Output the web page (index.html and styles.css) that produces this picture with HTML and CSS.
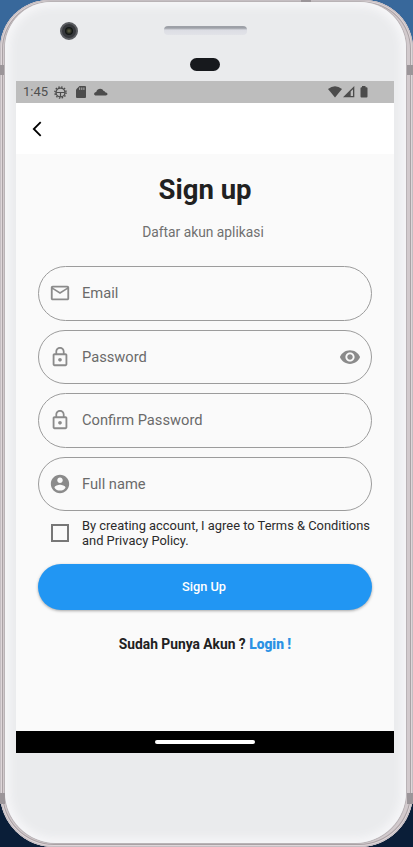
FILE: index.html
```html
<!DOCTYPE html>
<html lang="id">
<head>
<meta charset="utf-8">
<title>Sign up</title>
<link rel="stylesheet" href="styles.css">
</head>
<body>
<div class="phone">
  <i class="antenna top-left"></i><i class="antenna top-right"></i><i class="antenna bottom-left"></i><i class="antenna bottom-right"></i><i class="antenna upper"></i>
  <div class="face">
    <div class="camera"><i></i></div>
    <div class="speaker"></div>
    <div class="sensor"></div>
    <main class="screen">
      <header class="status">
        <span class="time">1:45</span>
        <svg class="gear" width="13" height="13" viewBox="0 0 14 14"><circle cx="7" cy="7" r="6" fill="none" stroke="#4c4c4c" stroke-width="1.6" stroke-dasharray="1.55 1.59"/><circle cx="7" cy="7" r="4.8" fill="none" stroke="#4c4c4c" stroke-width="1.4"/><path d="M2.5 7h9M7 7v4.5" stroke="#4c4c4c" stroke-width="1.3"/></svg>
        <svg class="sd" width="10" height="12" viewBox="0 0 10 12"><path d="M3.5 0H9q1 0 1 1v10q0 1-1 1H1q-1 0-1-1V3.5z" fill="#4c4c4c"/><path d="M3.7 1.5v2.4M5.8 1.5v2.4M7.9 1.5v2.4" stroke="#bdbdbd" stroke-width=".9"/></svg>
        <svg class="cloud" width="14" height="8" viewBox="0 0 14 8"><path d="M2.2 7.5C-.7 7.5-.6 4.6 2.2 4 3.3.2 8-.5 9.6 3c.8 0 1.3.5 1.5 1.2 3 .1 3.2 3.3.6 3.3z" fill="#4c4c4c"/></svg>
        <svg class="wifi" width="14" height="12" viewBox="0 0 14 12"><path d="M0 3Q7-2.7 14 3L7 11.5z" fill="#4c4c4c"/></svg>
        <svg class="signal" width="12" height="12" viewBox="0 0 12 12"><path d="M0 11.3L11.3 0v11.3z" fill="#4c4c4c"/><path d="M7.7 5.5L10 3.2V10H7.7z" fill="#bdbdbd"/></svg>
        <svg class="battery" width="8" height="12" viewBox="0 0 8 12"><path d="M2 0h3.5v1.2h1q1 0 1 1v8.3q0 1-1 1h-5q-1 0-1-1V2.2q0-1 1-1H2z" fill="#4c4c4c"/></svg>
      </header>
      <nav class="appbar"><svg width="10" height="16" viewBox="0 0 10 16"><path d="M8.7 1.1L1.8 8l6.9 6.9" fill="none" stroke="#000" stroke-width="1.8"/></svg></nav>
      <form class="content">
        <h1>Sign up</h1>
        <p class="subtitle">Daftar akun aplikasi</p>
        <div class="field"><svg class="icon" viewBox="0 0 24 24"><path d="M22 6c0-1.1-.9-2-2-2H4c-1.1 0-2 .9-2 2v12c0 1.1.9 2 2 2h16c1.1 0 2-.9 2-2V6zm-2 0l-8 5-8-5h16zm0 12H4V8l8 5 8-5v10z"/></svg><span>Email</span></div>
        <div class="field"><svg class="icon" viewBox="0 0 24 24"><path d="M12 17c1.1 0 2-.9 2-2s-.9-2-2-2-2 .9-2 2 .9 2 2 2zm6-9h-1V6c0-2.76-2.24-5-5-5S7 3.24 7 6v2H6c-1.1 0-2 .9-2 2v10c0 1.1.9 2 2 2h12c1.1 0 2-.9 2-2V10c0-1.1-.9-2-2-2zM8.9 6c0-1.71 1.39-3.1 3.1-3.1s3.1 1.39 3.1 3.1v2H8.9V6zM18 20H6V10h12v10z"/></svg><span>Password</span><svg class="icon eye" viewBox="0 0 24 24"><path d="M12 4.5C7 4.5 2.73 7.61 1 12c1.73 4.39 6 7.5 11 7.5s9.27-3.11 11-7.5c-1.73-4.39-6-7.5-11-7.5zM12 17c-2.76 0-5-2.24-5-5s2.24-5 5-5 5 2.24 5 5-2.24 5-5 5zm0-8c-1.66 0-3 1.34-3 3s1.34 3 3 3 3-1.34 3-3-1.34-3-3-3z"/></svg></div>
        <div class="field"><svg class="icon" viewBox="0 0 24 24"><path d="M12 17c1.1 0 2-.9 2-2s-.9-2-2-2-2 .9-2 2 .9 2 2 2zm6-9h-1V6c0-2.76-2.24-5-5-5S7 3.24 7 6v2H6c-1.1 0-2 .9-2 2v10c0 1.1.9 2 2 2h12c1.1 0 2-.9 2-2V10c0-1.1-.9-2-2-2zM8.9 6c0-1.71 1.39-3.1 3.1-3.1s3.1 1.39 3.1 3.1v2H8.9V6zM18 20H6V10h12v10z"/></svg><span>Confirm Password</span></div>
        <div class="field"><svg class="icon" viewBox="0 0 24 24"><path d="M12 2C6.48 2 2 6.48 2 12s4.48 10 10 10 10-4.48 10-10S17.52 2 12 2zm0 3c1.66 0 3 1.34 3 3s-1.34 3-3 3-3-1.34-3-3 1.34-3 3-3zm0 14.2c-2.5 0-4.71-1.28-6-3.22.03-1.99 4-3.08 6-3.08 1.99 0 5.97 1.09 6 3.08-1.29 1.94-3.5 3.22-6 3.22z"/></svg><span>Full name</span></div>
        <div class="terms"><i class="checkbox"></i><span>By creating account, I agree to Terms &amp; Conditions<br>and Privacy Policy.</span></div>
        <button type="button">Sign Up</button>
        <p class="login">Sudah Punya Akun ? <b>Login !</b></p>
      </form>
      <footer class="home"><i></i></footer>
    </main>
  </div>
</div>
</body>
</html>
```
FILE: styles.css
```css
* { box-sizing: border-box; }
body {
  margin: 0; width: 413px; height: 847px; overflow: hidden;
  font-family: Roboto, sans-serif;
  background: linear-gradient(#38689b 0, #38689b 400px, #0a1e38 401px);
}
.phone {
  position: relative; height: 847px; padding: 2px 7px 4px 5px;
  border-radius: 49px 49px 54px 54px;
  background: #d2cacd;
  box-shadow: inset 0 0 0 1px #c5bec2, inset 0 0 0 2px #ded6d9, inset 0 0 0 3px #aaa2a5;
}
.face {
  height: 841px; padding: 20px 12px 0 11px;
  display: flex; flex-direction: column;
  border-radius: 46px 46px 51px 51px;
  background: #eaebed;
  box-shadow: 0 0 0 1px #b9b3b6, inset 0 0 8px 5px #f6f6f8;
}
.camera {
  width: 18px; height: 18px; margin-left: 44px; flex: none;
  display: grid; place-items: center; border-radius: 50%;
  background: #36383c; border: 2px solid #5a5c60;
}
.camera i { width: 8px; height: 8px; border-radius: 50%; background: radial-gradient(#66664a, #111513 60%); }
.speaker {
  width: 83px; height: 9px; margin: -14px 0 0 148px; flex: none;
  border-radius: 4px; background: linear-gradient(#9da0a7 0 2px, #b9bbc2 3px, #dcdde4 4px, #e2e3e8);
}
.sensor { width: 30px; height: 13px; margin: 23px 0 10px 174px; flex: none; border-radius: 7px; background: #17191d; }
.antenna { position: absolute; background: #9b9599; }
.top-left { left: 0; top: 65px; width: 4px; height: 10px; }
.top-right { right: 0; top: 65px; width: 6px; height: 10px; }
.bottom-left { left: 0; top: 793px; width: 5px; height: 11px; }
.bottom-right { right: 0; top: 793px; width: 6px; height: 11px; }
.upper { left: 301px; top: 0; width: 10px; height: 2px; }
.screen { width: 378px; height: 672px; display: flex; flex-direction: column; background: #fafafa; }
.status { height: 22px; padding: 0 25px 0 7px; display: flex; align-items: center; flex: none; background: #bdbdbd; }
.time { width: 31px; font-size: 13px; line-height: 22px; color: #4f4f4f; }
.sd { margin-left: 9px; }
.cloud { margin-left: 8px; }
.wifi { margin-left: auto; }
.signal { margin-left: 1px; }
.battery { margin-left: 5px; margin-right: 1px; }
.appbar { height: 51px; padding: 0 16px; display: flex; align-items: center; flex: none; background: #fff; }
.content { height: 577px; padding: 19px 22px 0; display: flex; flex-direction: column; flex: none; }
h1 { margin: 0; height: 34px; line-height: 34px; font-size: 27.5px; font-weight: 700; text-align: center; color: #212121; }
.subtitle { margin: 16px 0 24px; height: 19px; line-height: 19px; font-size: 13.8px; text-align: center; color: #707070; padding-right: 4px; }
.field {
  height: 54.5px; margin-bottom: 9px; padding: 0 11px 0 10px; flex: none;
  display: flex; align-items: center;
  border: 1px solid #9c9c9c; border-radius: 27.5px;
  font-size: 14.7px; color: #6a6a6a;
}
.icon { width: 22px; height: 22px; margin-right: 11px; fill: #8b8b8b; flex: none; }
.eye { margin: 0 -1px 0 auto; }
.terms { height: 45px; margin-top: -1px; display: flex; padding-left: 13px; font-size: 12.9px; line-height: 14.7px; color: #2b2b2b; }
.terms span { white-space: nowrap; }
.checkbox { width: 18px; height: 18px; margin: 5px 13px 0 0; flex: none; border: 2px solid #777; }
button {
  height: 46px; border: 0; border-radius: 23px; flex: none; padding: 0 2px 0 0;
  background: #2196f3; color: #fff; font: 500 12.8px/46px Roboto, sans-serif;
  box-shadow: 0 1px 3px rgba(0,0,0,.34);
}
.login { margin: 25px 0 0; line-height: 18px; text-align: center; font-size: 13.8px; font-weight: 700; color: #212121; }
.login b { color: #2b92e4; }
.home { height: 22px; display: grid; place-items: center; background: #000; flex: none; }
.home i { width: 100px; height: 4px; border-radius: 2px; background: #fff; }
```
